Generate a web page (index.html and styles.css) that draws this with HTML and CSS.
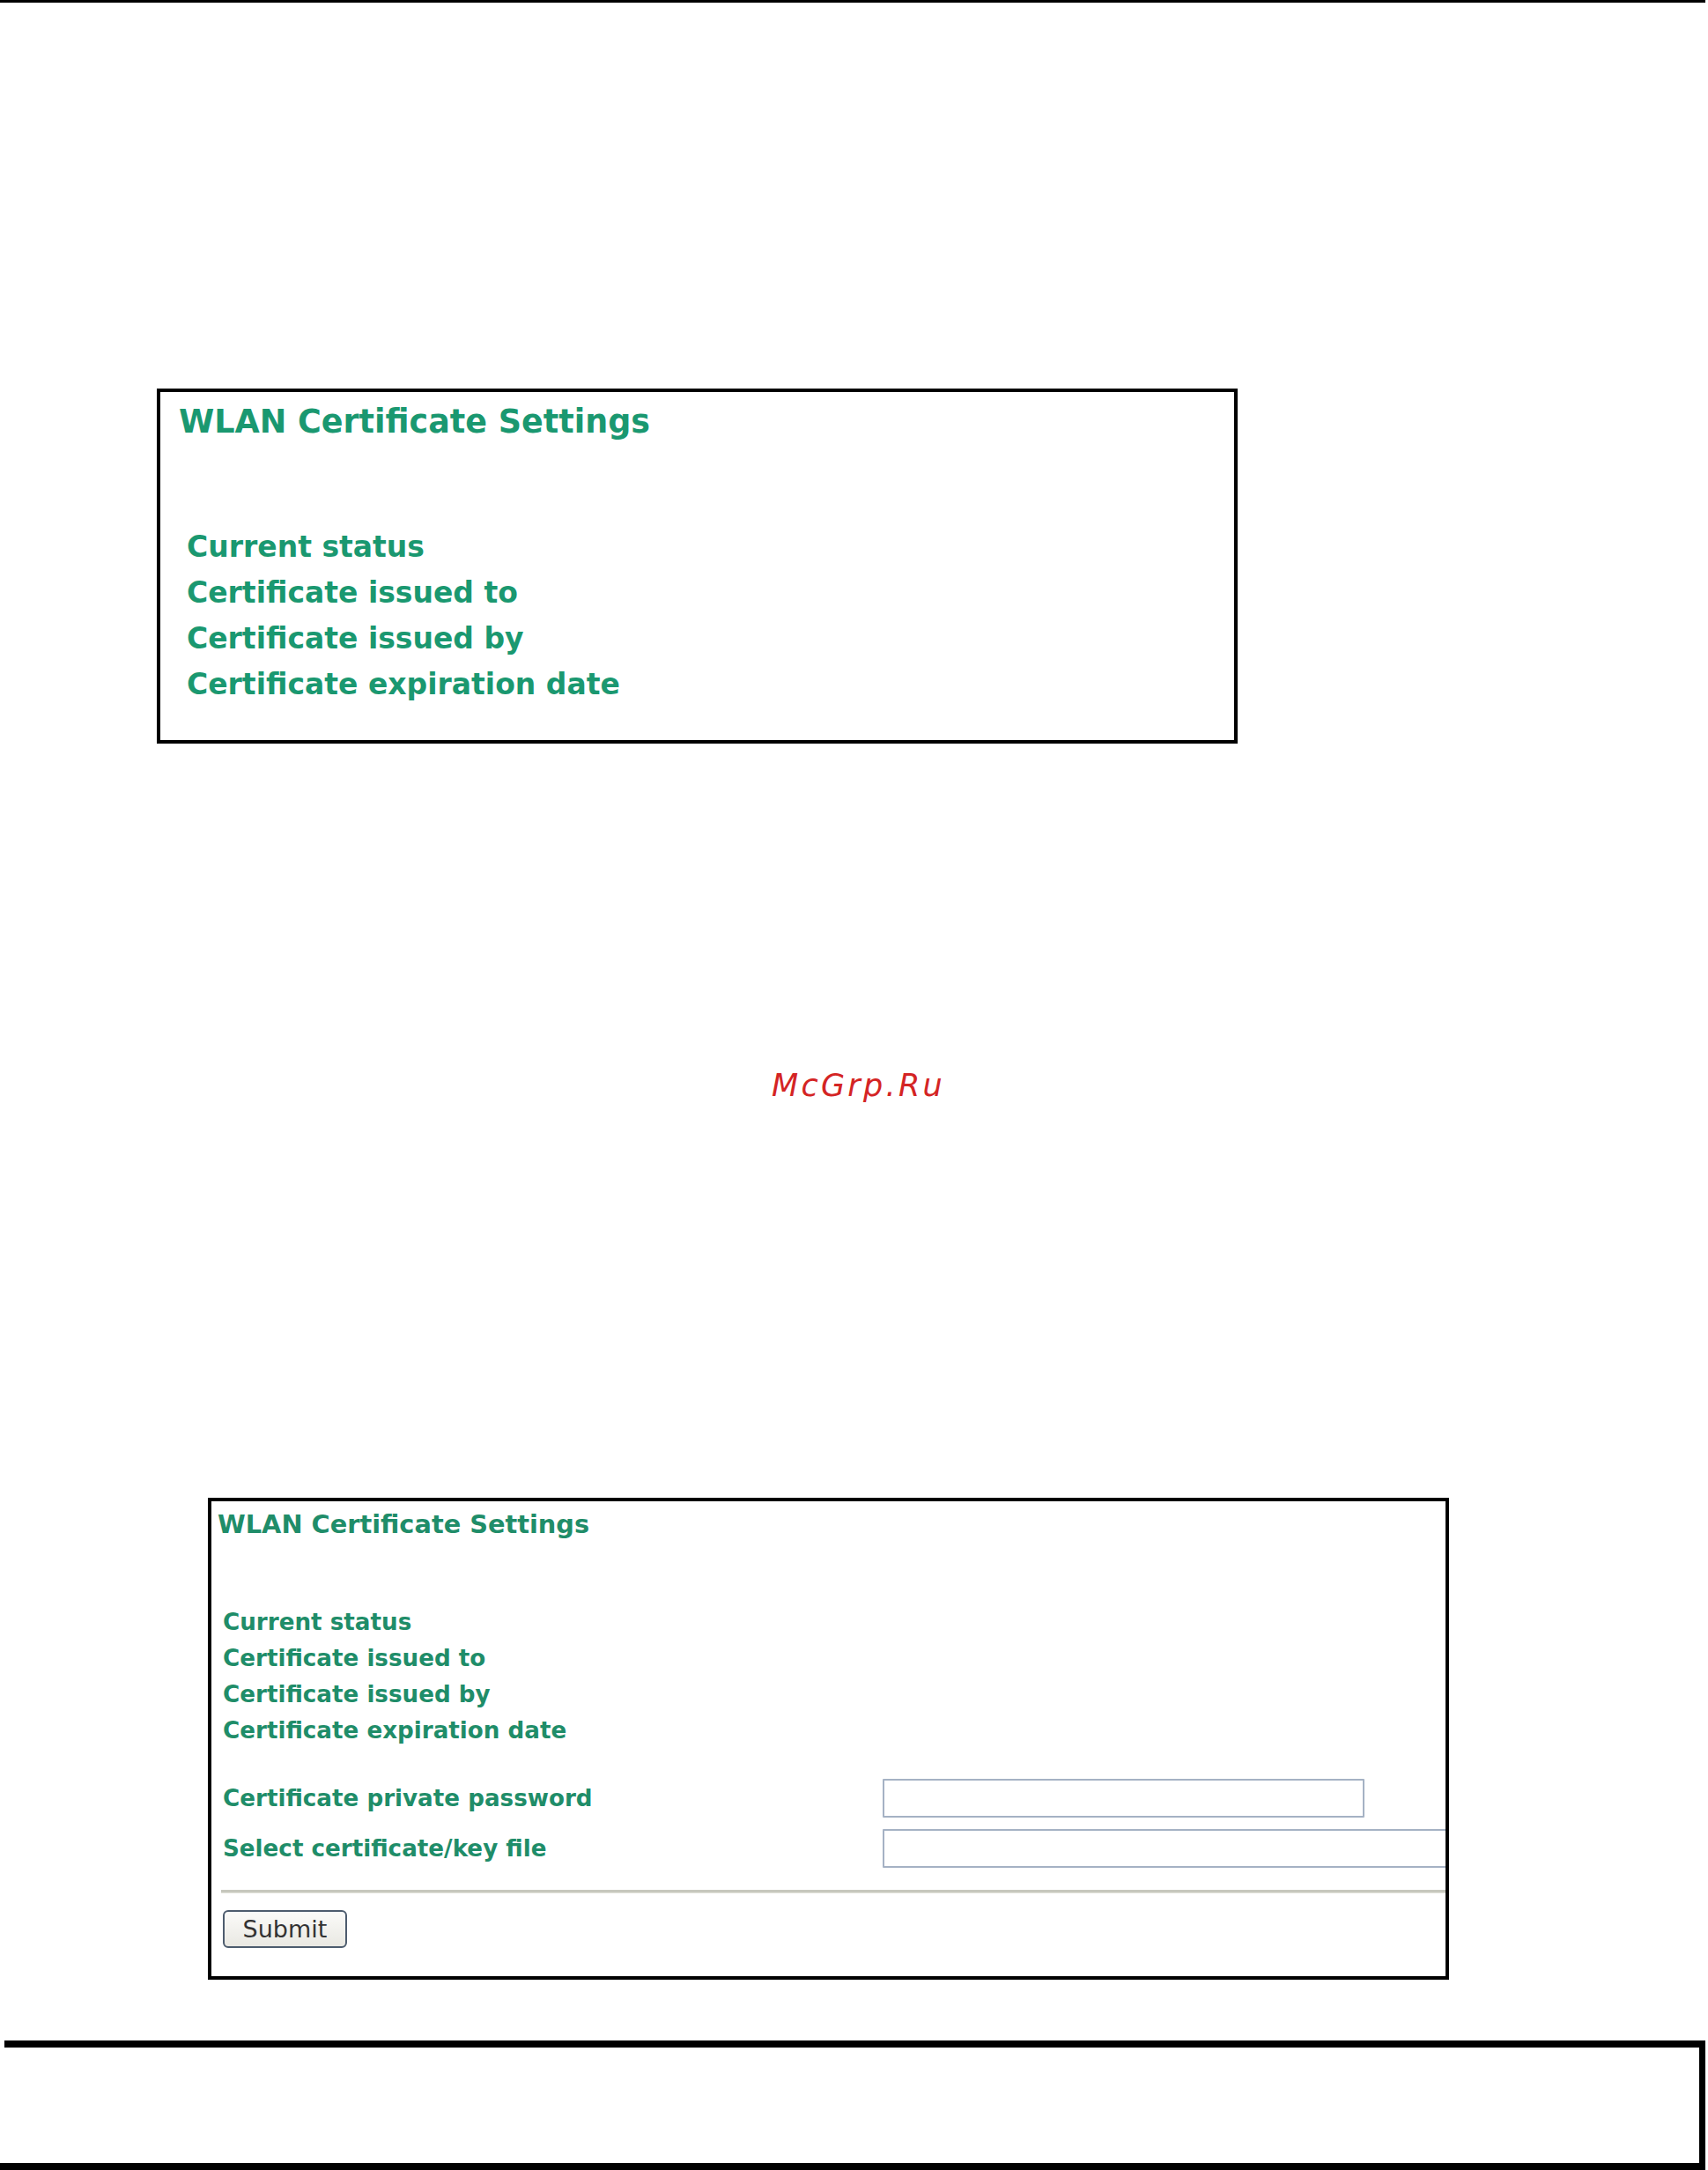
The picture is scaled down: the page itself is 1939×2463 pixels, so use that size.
FILE: index.html
```html
<!DOCTYPE html>
<html lang="en">
<head>
<meta charset="utf-8">
<title>WLAN Certificate Settings</title>
<link rel="stylesheet" href="styles.css">
</head>
<body>
<div class="top-rule"></div>

<section class="panel panel-large">
  <h2 class="panel-title">WLAN Certificate Settings</h2>
  <ul class="info-list">
    <li>Current status</li>
    <li>Certificate issued to</li>
    <li>Certificate issued by</li>
    <li>Certificate expiration date</li>
  </ul>
</section>

<p class="watermark">McGrp.Ru</p>

<section class="panel panel-form">
  <h2 class="panel-title">WLAN Certificate Settings</h2>
  <ul class="info-list">
    <li>Current status</li>
    <li>Certificate issued to</li>
    <li>Certificate issued by</li>
    <li>Certificate expiration date</li>
  </ul>
  <div class="form-rows">
    <div class="form-row">
      <label class="form-label" for="cert-pass">Certificate private password</label>
      <input class="field field-pass" id="cert-pass" type="password">
    </div>
    <div class="form-row">
      <label class="form-label" for="cert-file">Select certificate/key file</label>
      <input class="field field-file" id="cert-file" type="text">
    </div>
  </div>
  <div class="separator"></div>
  <button class="submit" type="button">Submit</button>
</section>

<div class="footer-frame"></div>
<div class="bottom-rule"></div>
</body>
</html>
```

FILE: styles.css
```css
html, body {
  margin: 0;
  padding: 0;
  background: #ffffff;
}

body {
  width: 1939px;
  font-family: "DejaVu Sans", Verdana, sans-serif;
  overflow: hidden;
}

.top-rule {
  width: 1936px;
  height: 3px;
  background: #000;
}

/* settings panels */
.panel {
  box-sizing: border-box;
  border: 4px solid #000;
  background: #fff;
  overflow: hidden;
}

.panel-title {
  margin: 0;
  font-weight: bold;
  white-space: nowrap;
}

.info-list {
  list-style: none;
  margin: 0;
  padding: 0;
  font-weight: bold;
  white-space: nowrap;
}

/* upper, large panel */
.panel-large {
  margin: 438px 0 0 178px;
  width: 1227px;
  height: 403px;
  padding: 12px 20px 0 21px;
  color: #1a9870;
}

.panel-large .panel-title {
  font-size: 36.5px;
  line-height: 44px;
}

.panel-large .info-list {
  margin-top: 94px;
  padding-left: 9px;
  font-size: 33px;
  line-height: 52px;
}

/* red site mark */
.watermark {
  margin: 366px 0 0 0;
  text-align: center;
  padding-left: 10px;
  font-family: "DejaVu Sans", sans-serif;
  font-style: italic;
  font-size: 35px;
  line-height: 44px;
  letter-spacing: 3.3px;
  color: #d42424;
}

/* lower panel with upload form */
.panel-form {
  margin: 446px 0 0 236px;
  width: 1409px;
  height: 547px;
  padding: 8px 0 0 7px;
  color: #1f8d69;
}

.panel-form .panel-title {
  font-size: 28.8px;
  line-height: 36px;
}

.panel-form .info-list {
  margin-top: 73px;
  padding-left: 6px;
  font-size: 26.2px;
  line-height: 41px;
}

.form-rows {
  margin-top: 34px;
  padding-left: 6px;
  display: flex;
  flex-direction: column;
  gap: 13px;
}

.form-row {
  display: flex;
  align-items: center;
  height: 44px;
}

.form-label {
  width: 749px;
  flex: none;
  font-weight: bold;
  font-size: 26.2px;
  white-space: nowrap;
}

.field {
  box-sizing: border-box;
  flex: none;
  height: 44px;
  margin: 0;
  padding: 0 6px;
  border: 2px solid #a5b2c4;
  border-radius: 1px;
  background: #fff;
  font: 24px "DejaVu Sans", sans-serif;
  outline: none;
}

.field-pass {
  width: 547px;
}

.field-file {
  width: 700px;
}

.separator {
  margin: 25px 0 0 4px;
  height: 3px;
  background: #c6c7bd;
  border-bottom: 1px solid #e4e4dc;
}

.submit {
  margin: 19px 0 0 6px;
  box-sizing: border-box;
  width: 141px;
  height: 43px;
  padding: 0;
  border: 2px solid #4d5c6e;
  border-radius: 6px;
  background: linear-gradient(#fbfbf9, #e9e8e2);
  font: 27px "DejaVu Sans", sans-serif;
  color: #333;
  display: block;
}

/* page footer frame */
.footer-frame {
  box-sizing: border-box;
  margin: 69px 0 0 5px;
  width: 1931px;
  height: 139px;
  border-top: 8px solid #000;
  border-right: 7px solid #000;
}

.bottom-rule {
  width: 1936px;
  height: 8px;
  background: #000;
}
```
